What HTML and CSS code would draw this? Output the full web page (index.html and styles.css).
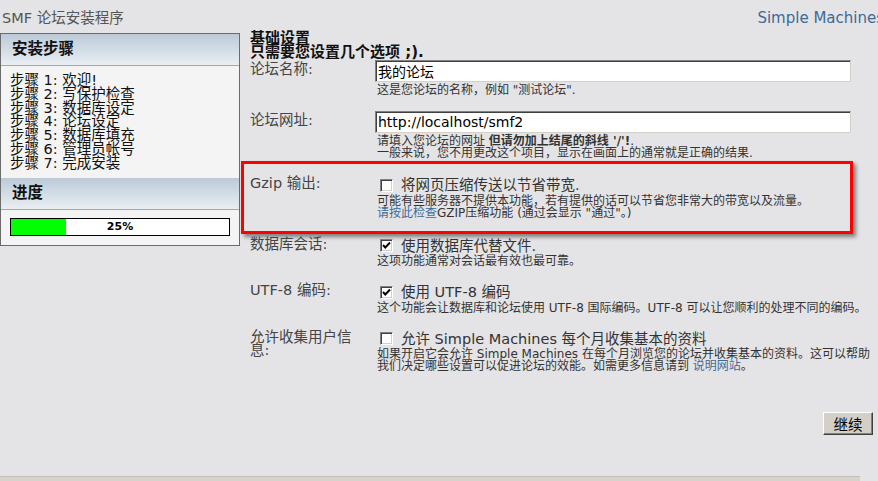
FILE: index.html
```html
<!DOCTYPE html>
<html lang="zh-CN">
<head>
<meta charset="UTF-8">
<title>SMF 论坛安装程序</title>
<link rel="stylesheet" href="styles.css">
</head>
<body>
<div class="top">
    <span class="top-title">SMF 论坛安装程序</span>
    <span class="top-brand">Simple Machines</span>
</div>

<div class="main">
    <div class="sidebar">
        <div class="side-head">安装步骤</div>
        <div class="steps">
            <div>步骤 1: 欢迎!</div>
            <div>步骤 2: 写保护检查</div>
            <div>步骤 3: 数据库设定</div>
            <div>步骤 4: 论坛设定</div>
            <div>步骤 5: 数据库填充</div>
            <div>步骤 6: 管理员帐号</div>
            <div>步骤 7: 完成安装</div>
        </div>
        <div class="side-head">进度</div>
        <div class="progress-wrap">
            <div class="progress">
                <div class="progress-fill" style="width: 25%"></div>
                <div class="progress-text">25%</div>
            </div>
        </div>
    </div>

    <div class="content">
        <h2 class="page-title">基础设置</h2>
        <p class="page-intro">只需要您设置几个选项 ;).</p>

        <div class="row row-input row-first">
            <div class="field-label">论坛名称:</div>
            <div class="field">
                <input class="text-input" type="text" value="我的论坛">
                <div class="desc">这是您论坛的名称，例如 "测试论坛".</div>
            </div>
        </div>

        <div class="row row-input">
            <div class="field-label">论坛网址:</div>
            <div class="field">
                <input class="text-input" type="text" value="http://localhost/smf2">
                <div class="desc">请填入您论坛的网址 <b>但请勿加上结尾的斜线 '/'!</b>.<br>一般来说，您不用更改这个项目，显示在画面上的通常就是正确的结果.</div>
            </div>
        </div>

        <div class="flagged">
            <div class="row row-check">
                <div class="field-label">Gzip 输出:</div>
                <div class="field">
                    <div class="check-line"><span class="checkbox"></span>将网页压缩传送以节省带宽.</div>
                    <div class="desc">可能有些服务器不提供本功能，若有提供的话可以节省您非常大的带宽以及流量。<br><a href="#">请按此检查</a>GZIP压缩功能 (通过会显示 "通过"。)</div>
                </div>
            </div>
        </div>

        <div class="row row-check">
            <div class="field-label">数据库会话:</div>
            <div class="field">
                <div class="check-line"><span class="checkbox"><svg width="11" height="11" viewBox="0 0 11 11"><polyline points="2,5 4.3,7.5 9,2.5" fill="none" stroke="#000" stroke-width="1.9"/></svg></span>使用数据库代替文件.</div>
                <div class="desc">这项功能通常对会话最有效也最可靠。</div>
            </div>
        </div>

        <div class="row row-check">
            <div class="field-label">UTF-8 编码:</div>
            <div class="field">
                <div class="check-line"><span class="checkbox"><svg width="11" height="11" viewBox="0 0 11 11"><polyline points="2,5 4.3,7.5 9,2.5" fill="none" stroke="#000" stroke-width="1.9"/></svg></span>使用 UTF-8 编码</div>
                <div class="desc">这个功能会让数据库和论坛使用 UTF-8 国际编码。UTF-8 可以让您顺利的处理不同的编码。</div>
            </div>
        </div>

        <div class="row row-check">
            <div class="field-label">允许收集用户信<br>息:</div>
            <div class="field">
                <div class="check-line"><span class="checkbox"></span>允许 Simple Machines 每个月收集基本的资料</div>
                <div class="desc">如果开启它会允许 Simple Machines 在每个月浏览您的论坛并收集基本的资料。这可以帮助我们决定哪些设置可以促进论坛的效能。如需更多信息请到 <a href="#">说明网站</a>。</div>
            </div>
        </div>

        <div class="actions">
            <button class="btn-continue" type="button">继续</button>
        </div>
    </div>
</div>

<div class="statusbar"></div>
</body>
</html>
```

FILE: styles.css
```css
html, body {
    margin: 0;
    background: #e4e4e6;
    overflow: hidden;
}
body {
    font-family: "DejaVu Sans", "Noto Sans CJK SC", sans-serif;
    color: #333;
    min-height: 100vh;
    display: flex;
    flex-direction: column;
}
a {
    color: #3d6b98;
    text-decoration: none;
}

/* header line */
.top {
    height: 26px;
    padding: 5px 0 0 2px;
    display: flex;
    justify-content: space-between;
    line-height: 26px;
}
.top-title {
    font-size: 14.5px;
    color: #555;
}
.top-brand {
    font-size: 15px;
    color: #3e6a96;
    white-space: nowrap;
    flex-shrink: 0;
    margin-right: -6px;
}

.main {
    display: flex;
    gap: 10px;
    padding-right: 5px;
}

/* left column */
.sidebar {
    width: 238px;
    flex-shrink: 0;
    align-self: flex-start;
    margin-top: 2px;
    border: 1px solid #6b6b6b;
    background: #f4f4f4;
}
.side-head {
    height: 31px;
    line-height: 31px;
    padding-left: 11px;
    font-size: 15.5px;
    font-weight: bold;
    color: #111;
    background: linear-gradient(#bccad7, #e9eef3);
    border-bottom: 1px solid #9ea9b4;
}
.steps {
    padding: 8px 0 7px 9px;
    font-size: 14.5px;
    line-height: 13.8px;
    color: #111;
}
.progress-wrap {
    padding: 8px 9px 9px 9px;
}
.progress {
    display: grid;
    height: 16px;
    border: 1px solid #000;
    background: #fff;
}
.progress-fill,
.progress-text {
    grid-area: 1 / 1;
}
.progress-fill {
    background: #00ff00;
}
.progress-text {
    text-align: center;
    font-size: 11px;
    font-weight: bold;
    line-height: 16px;
    color: #000;
}

/* settings form */
.content {
    flex: 1;
}
.page-title,
.page-intro {
    margin: 0;
    font-size: 15px;
    line-height: 14px;
    font-weight: bold;
    color: #111;
}
.row {
    display: grid;
    grid-template-columns: 125px 1fr;
}
.field-label {
    width: 110px;
    font-size: 14.5px;
    line-height: 13px;
    color: #444;
}
.row-first {
    margin-top: 1px;
    margin-bottom: 15.5px;
}
.row-input .field-label {
    padding-top: 3px;
}
.text-input {
    display: block;
    width: 476px;
    height: 22px;
    box-sizing: border-box;
    margin: 0;
    padding: 0 2px;
    font-family: "DejaVu Sans", "Noto Sans CJK SC", sans-serif;
    font-size: 14px;
    color: #000;
    background: #fff;
    border: 1px solid;
    border-color: #808080 #d4d0c8 #d4d0c8 #808080;
    box-shadow: inset 1px 1px 0 #404040;
    outline: none;
}
.desc {
    margin-top: 1.5px;
    padding-left: 2px;
    font-size: 12px;
    line-height: 12px;
    color: #333;
}
.row-check {
    margin-bottom: 17px;
}
.check-line {
    display: flex;
    align-items: center;
    font-size: 14.5px;
    line-height: 16px;
    color: #333;
    white-space: nowrap;
}
.checkbox {
    display: flex;
    align-items: center;
    justify-content: center;
    width: 11px;
    height: 11px;
    margin: 0 8px 0 5px;
    background: #fff;
    border: 1px solid;
    border-color: #808080 #fff #fff #808080;
    box-shadow: inset 1px 1px 0 #404040, inset -1px -1px 0 #d4d0c8;
}

/* highlighted Gzip option */
.flagged {
    margin: 2.5px 20px 4px -9px;
    padding: 13px 0 12px 6px;
    border: 3px solid #ff0000;
    box-shadow: 3px 3px 4px rgba(0, 0, 0, 0.45);
}
.flagged .row-check {
    margin-bottom: 0;
}

.actions {
    display: flex;
    justify-content: flex-end;
    margin-top: 40px;
}
.btn-continue {
    width: 50px;
    height: 23px;
    padding: 0;
    font-family: "DejaVu Sans", "Noto Sans CJK SC", sans-serif;
    font-size: 14.5px;
    color: #000;
    background: #d4d0c8;
    border: 1px solid;
    border-color: #fff #404040 #404040 #fff;
    box-shadow: inset -1px -1px 0 #808080;
}

.statusbar {
    margin-top: auto;
    width: 860px;
    height: 4px;
    border-top: 1px solid #c4c0b8;
    background: #d6d3cc;
}
```
